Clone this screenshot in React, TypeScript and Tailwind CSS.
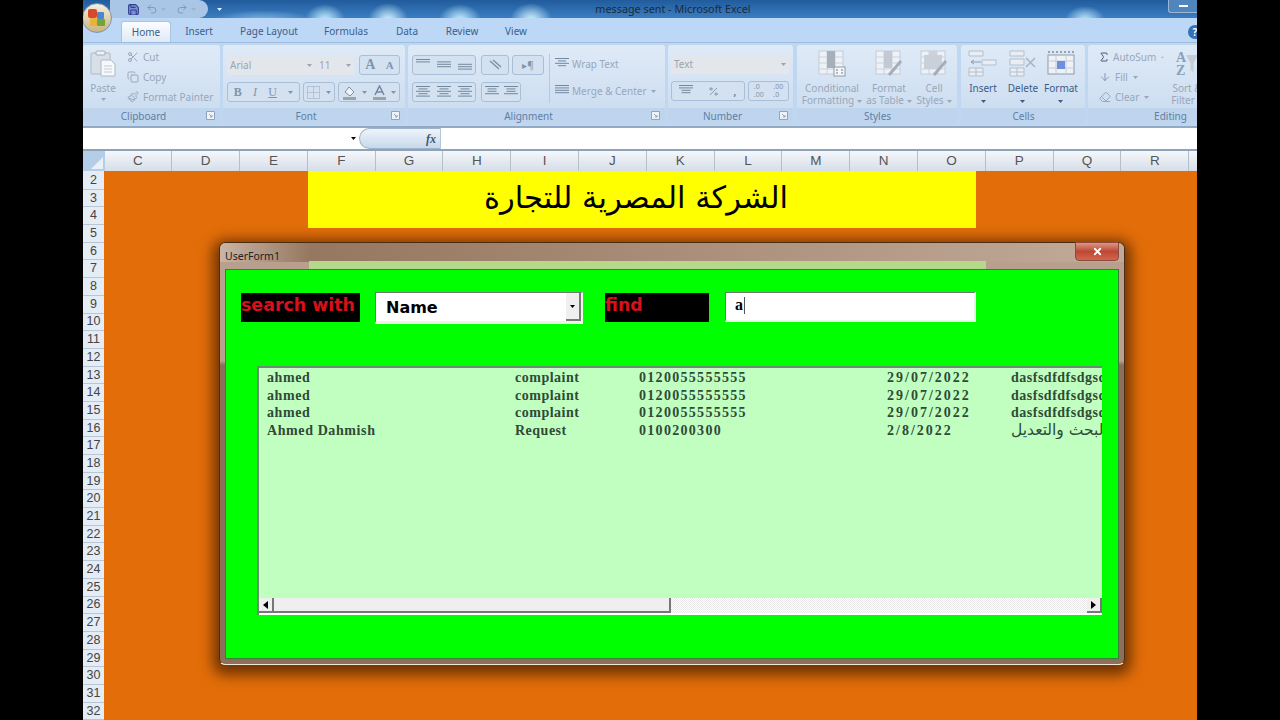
import { Scissors, Copy, Paintbrush, Sigma, Eraser, ArrowDown, Percent, Save, Undo2, Redo2, X } from "lucide-react";
import type { ReactNode } from "react";

const COLUMNS = ["C", "D", "E", "F", "G", "H", "I", "J", "K", "L", "M", "N", "O", "P", "Q", "R"];
const ROWS = Array.from({ length: 31 }, (_, i) => i + 2);
const TABS = [
  { label: "Insert", width: "w-[56px]" },
  { label: "Page Layout", width: "w-[84px]" },
  { label: "Formulas", width: "w-[70px]" },
  { label: "Data", width: "w-[52px]" },
  { label: "Review", width: "w-[58px]" },
  { label: "View", width: "w-[50px]" },
];
const RECORDS = [
  ["ahmed", "complaint", "0120055555555", "29/07/2022", "dasfsdfdfsdgsdfg"],
  ["ahmed", "complaint", "0120055555555", "29/07/2022", "dasfsdfdfsdgsdfg"],
  ["ahmed", "complaint", "0120055555555", "29/07/2022", "dasfsdfdfsdgsdfg"],
  ["Ahmed Dahmish", "Request", "0100200300", "2/8/2022", "البحث والتعديل"],
];

const MUTED = "text-[#98a7ba]";

function Chevron({ className = "" }: { className?: string }) {
  return (
    <svg width="5" height="3" viewBox="0 0 5 3" className={className}>
      <path d="M0 0h5L2.5 3z" fill="currentColor" />
    </svg>
  );
}

function Launcher() {
  return (
    <svg width="9" height="9" viewBox="0 0 9 9" className="text-[#8fa5bf]">
      <path d="M.5.5h8v8h-8z" fill="#eef3f9" stroke="currentColor" />
      <path d="M3 3l3 3M6 4v2H4" stroke="currentColor" fill="none" />
    </svg>
  );
}

function PasteIcon() {
  return (
    <svg width="26" height="27" viewBox="0 0 26 27">
      <rect x="1" y="3" width="19" height="21" rx="1" fill="#d9dfe6" stroke="#aeb8c4" />
      <rect x="6" y="1" width="9" height="4" rx="1" fill="#eef1f5" stroke="#a2adba" />
      <path d="M11 10h10l4 4v12H11z" fill="#f6f8fb" stroke="#aeb8c4" />
      <path d="M14 16h8M14 19h8M14 22h8" stroke="#c3ccd7" />
    </svg>
  );
}

function Group({ label, width, launcher = true, children }: { label: string; width: string; launcher?: boolean; children: ReactNode }) {
  return (
    <div className={`${width} flex h-[78px] shrink-0 flex-col overflow-hidden rounded-[3px] bg-gradient-to-b from-[#dfeaf7] to-[#c9dbef]`}>
      <div className="h-[63px] shrink-0">{children}</div>
      <div className="flex h-[15px] items-center bg-[#bfd5ed] pl-[6px] pr-[5px]">
        <span className={`flex-1 text-center text-[10px] leading-none text-[#5d7ea6] ${launcher ? "mr-[8px]" : ""}`}>{label}</span>
        {launcher ? <Launcher /> : null}
      </div>
    </div>
  );
}

function Combo({ value, width }: { value: string; width: string }) {
  return (
    <div className={`${width} flex h-[19px] items-center justify-between bg-[#e3e6ea] px-[3px] text-[10px] text-[#9aa5b2]`}>
      <span>{value}</span>
      <Chevron className="text-[#9aa5b2]" />
    </div>
  );
}

function ButtonStrip({ width, children }: { width: string; children: ReactNode }) {
  return (
    <div className={`${width} flex h-[20px] items-center justify-around rounded-[3px] border border-[#a9bfd8] bg-[#d3e1f1] text-[#8095ad]`}>
      {children}
    </div>
  );
}

function Lines({ rows }: { rows: number[] }) {
  return (
    <svg width="14" height="12" viewBox="0 0 14 12">
      {rows.map((w, i) => (
        <rect key={i} x={(14 - w) / 2} y={i * 2.4} width={w} height="1" fill="#72889f" />
      ))}
    </svg>
  );
}

function SheetIcon({ tint = "#b6c0cc", children }: { tint?: string; children?: ReactNode }) {
  return (
    <svg width="28" height="27" viewBox="0 0 28 27">
      <rect x="1" y="1" width="24" height="23" fill="#eef2f7" stroke="#c3ccd7" />
      <path d="M9 1v23M17 1v23M1 7h24M1 13h24M1 19h24" stroke="#c9d2dc" />
      <rect x="9" y="1" width="8" height="17" fill={tint} />
      {children}
    </svg>
  );
}

function BigButton({ label, sub, width, dark = false, children }: { label: string; sub: string; width: string; dark?: boolean; children: ReactNode }) {
  return (
    <div className={`${width} flex shrink-0 flex-col items-center pt-[5px]`}>
      <div className="flex h-[27px] items-center justify-center">{children}</div>
      <div className={`mt-[5px] whitespace-nowrap text-center text-[10px] leading-[12px] ${dark ? "text-[#3c5c85]" : MUTED}`}>
        <div>{label}</div>
        <div className="flex h-[12px] items-center justify-center gap-[3px]">
          {sub}
          <Chevron className="mt-[2px]" />
        </div>
      </div>
    </div>
  );
}

function SmallAction({ icon, label, arrow = false }: { icon: ReactNode; label: string; arrow?: boolean }) {
  return (
    <div className={`flex h-[20px] items-center gap-[3px] whitespace-nowrap text-[10px] ${MUTED}`}>
      <span className="flex w-[14px] justify-center">{icon}</span>
      {label}
      {arrow ? <Chevron className="ml-[2px]" /> : null}
    </div>
  );
}

function TitleBar() {
  return (
    <div className="relative flex h-[18px] shrink-0 items-center justify-center bg-[#2c6db2] bg-[radial-gradient(ellipse_20px_16px_at_242px_20px,#c8f2ff,transparent),radial-gradient(ellipse_20px_17px_at_305px_20px,#d4f6ff,transparent),radial-gradient(ellipse_21px_16px_at_377px_20px,#c8f2ff,transparent),radial-gradient(ellipse_21px_17px_at_448px_20px,#d4f6ff,transparent),radial-gradient(ellipse_20px_14px_at_1002px_20px,#c0ecfb,transparent),radial-gradient(ellipse_50px_10px_at_180px_20px,#7db4e0,transparent),linear-gradient(#215c9c,#3a7dc2)] pl-[66px] text-[10.8px] text-[#1d2a38]">
      message sent - Microsoft Excel
      <div className="absolute right-0 top-0 flex h-[13px] w-[29px] items-center justify-center rounded-bl-[3px] border-b border-l border-[#9db7d2] bg-[#4f86bd]">
        <div className="h-[2px] w-[9px] bg-white" />
      </div>
    </div>
  );
}

function OfficeButton() {
  return (
    <div className="absolute left-[-1px] top-[3px] flex h-[30px] w-[30px] items-center justify-center rounded-full border border-[#7d95ad] bg-gradient-to-b from-[#f4f0df] to-[#c9b37f]">
      <svg width="20" height="20" viewBox="0 0 20 20">
        <rect x="1" y="1" width="9" height="9" rx="2" fill="#d8482b" />
        <rect x="10" y="4" width="7" height="7" rx="1" fill="#4f86c9" />
        <rect x="3" y="10" width="7" height="8" rx="1" fill="#e7b33c" />
        <rect x="10" y="11" width="8" height="7" rx="1" fill="#6fa53a" />
      </svg>
    </div>
  );
}

function QuickAccess() {
  return (
    <div className="absolute left-[27px] top-0 flex h-[18px] w-[98px] items-center rounded-r-full bg-[#a9c6e6] pl-[17px]">
      <Save size={13} className="text-[#2d3f8f]" fill="#7d8fd0" />
      <Undo2 size={12} className="ml-[6px] text-[#7f99b6]" />
      <Chevron className="ml-[3px] text-[#9db4cc]" />
      <Redo2 size={12} className="ml-[10px] text-[#7f99b6]" />
      <Chevron className="ml-[3px] text-[#9db4cc]" />
      <Chevron className="absolute right-[-14px] top-[8px] text-[#e8f1fa]" />
    </div>
  );
}

function Tabs() {
  return (
    <div className="flex h-[25px] shrink-0 items-end border-b border-[#9fbcdc] bg-[#bdd7f6] pl-[38px] text-[10px] text-[#3c5f88]">
      <div className="flex h-[21px] w-[50px] items-center justify-center rounded-t-[3px] border border-b-0 border-[#a9c4e0] bg-gradient-to-b from-[#fbfdff] to-[#dfeaf7]">Home</div>
      {TABS.map((t) => (
        <div key={t.label} className={`${t.width} flex h-[21px] items-center justify-center whitespace-nowrap`}>{t.label}</div>
      ))}
      <div className="ml-auto mb-[3px] flex h-[14px] w-[14px] translate-x-[5px] items-center justify-center rounded-full bg-[#3270b8] text-[10px] font-bold text-white">?</div>
    </div>
  );
}

function ClipboardGroup() {
  return (
    <Group label="Clipboard" width="w-[137px]">
      <div className="flex pl-[6px] pt-[5px]">
        <div className={`flex w-[28px] flex-col items-center text-[10px] ${MUTED}`}>
          <PasteIcon />
          <span className="mt-[5px] leading-[12px]">Paste</span>
          <Chevron className="mt-[4px]" />
        </div>
        <div className="ml-[9px] mt-[-3px] flex flex-col">
          <SmallAction icon={<Scissors size={12} />} label="Cut" />
          <SmallAction icon={<Copy size={12} />} label="Copy" />
          <SmallAction icon={<Paintbrush size={12} />} label="Format Painter" />
        </div>
      </div>
    </Group>
  );
}

function FontGroup() {
  return (
    <Group label="Font" width="w-[182px]">
      <div className="flex flex-col gap-[7px] pl-[4px] pt-[10px]">
        <div className="flex items-center gap-[1px]">
          <Combo value="Arial" width="w-[88px]" />
          <Combo value="11" width="w-[38px]" />
          <div className="ml-[4px]">
            <ButtonStrip width="w-[41px]">
              <span className="font-['Liberation_Serif'] text-[14px] font-bold leading-none">A</span>
              <span className="font-['Liberation_Serif'] text-[11px] font-bold leading-none">A</span>
            </ButtonStrip>
          </div>
        </div>
        <div className="flex items-center gap-[3px]">
          <ButtonStrip width="w-[73px]">
            <span className="font-['Liberation_Serif'] text-[12px] font-bold">B</span>
            <span className="font-['Liberation_Serif'] text-[12px] italic">I</span>
            <span className="font-['Liberation_Serif'] text-[12px] underline">U</span>
            <Chevron />
          </ButtonStrip>
          <ButtonStrip width="w-[32px]">
            <svg width="13" height="13" viewBox="0 0 13 13">
              <path d="M.5.5h12v12H.5zM6.500 .5v12M.5 6.500h12" stroke="#94a7bc" strokeDasharray="1 1" fill="none" />
            </svg>
            <Chevron />
          </ButtonStrip>
          <ButtonStrip width="w-[62px]">
            <svg width="15" height="15" viewBox="0 0 15 15">
              <path d="M3 7l4-5 5 5-4 4z" fill="#eef3f9" stroke="#7b8ea3" />
              <rect x="1" y="12" width="13" height="3" fill="#9aa5a5" />
            </svg>
            <Chevron />
            <svg width="13" height="15" viewBox="0 0 13 15">
              <path d="M2 10L6.500 1 11 10M4 7h5" stroke="#75889e" strokeWidth="1.500" fill="none" />
              <rect x="0" y="12" width="13" height="3" fill="#9aa5a5" />
            </svg>
            <Chevron />
          </ButtonStrip>
        </div>
      </div>
    </Group>
  );
}

function AlignmentGroup() {
  return (
    <Group label="Alignment" width="w-[257px]">
      <div className="flex gap-[5px] pl-[4px] pt-[10px]">
        <div className="flex flex-col gap-[7px]">
          <ButtonStrip width="w-[64px]">
            <Lines rows={[14, 14, 0, 0, 0]} />
            <Lines rows={[0, 14, 14, 14, 0]} />
            <Lines rows={[0, 0, 14, 14, 14]} />
          </ButtonStrip>
          <ButtonStrip width="w-[64px]">
            <Lines rows={[14, 9, 14, 9, 14]} />
            <Lines rows={[14, 9, 14, 9, 14]} />
            <Lines rows={[14, 9, 14, 9, 14]} />
          </ButtonStrip>
        </div>
        <div className="flex flex-col gap-[7px]">
          <div className="flex gap-[3px]">
            <ButtonStrip width="w-[28px]">
              <svg width="13" height="12" viewBox="0 0 13 12">
                <path d="M1 2l9 8M4 1l8 7" stroke="#7f93a9" strokeWidth="1.500" />
              </svg>
            </ButtonStrip>
            <ButtonStrip width="w-[32px]">
              <span className="text-[10px]">▸¶</span>
            </ButtonStrip>
          </div>
          <ButtonStrip width="w-[40px]">
            <Lines rows={[14, 9, 9, 14]} />
            <Lines rows={[14, 9, 9, 14]} />
          </ButtonStrip>
        </div>
        <div className="my-[-1px] w-[1px] self-stretch bg-[#b4c8de]" />
        <div className="mt-[-1px] flex flex-col gap-[7px]">
          <div className={`flex h-[20px] items-center gap-[3px] text-[10px] ${MUTED}`}>
            <Lines rows={[14, 8, 14, 8]} />
            Wrap Text
          </div>
          <div className={`flex h-[20px] items-center gap-[3px] whitespace-nowrap text-[10px] ${MUTED}`}>
            <Lines rows={[14, 14, 14, 14]} />
            Merge &amp; Center
            <Chevron className="ml-[1px]" />
          </div>
        </div>
      </div>
    </Group>
  );
}

function NumberGroup() {
  return (
    <Group label="Number" width="w-[125px]">
      <div className="flex flex-col gap-[7px] pl-[3px] pt-[10px]">
        <Combo value="Text" width="w-[118px]" />
        <div className="flex gap-[3px]">
          <ButtonStrip width="w-[74px]">
            <Lines rows={[14, 14, 9, 9]} />
            <Percent size={11} />
            <span className="text-[12px] font-bold leading-none">,</span>
          </ButtonStrip>
          <ButtonStrip width="w-[41px]">
            <span className="text-[7px] leading-[8px]">.0<br />.00</span>
            <span className="text-[7px] leading-[8px]">.00<br />.0</span>
          </ButtonStrip>
        </div>
      </div>
    </Group>
  );
}

function StylesGroup() {
  return (
    <Group label="Styles" width="w-[160px]" launcher={false}>
      <div className="flex pl-[3px]">
        <BigButton label="Conditional" sub="Formatting" width="w-[64px]">
          <SheetIcon tint="#a7afbb">
            <rect x="16" y="17" width="11" height="9" fill="#f4f6f9" stroke="#8f9aa8" />
            <path d="M18 20h2M18 23h2M23 20h2M23 23h2" stroke="#6f7c8c" />
          </SheetIcon>
        </BigButton>
        <BigButton label="Format" sub="as Table" width="w-[50px]">
          <SheetIcon tint="#c2c9d3">
            <path d="M14 25l12-14" stroke="#a4adb8" strokeWidth="3" />
          </SheetIcon>
        </BigButton>
        <BigButton label="Cell" sub="Styles" width="w-[40px]">
          <SheetIcon tint="#cdd3dc">
            <rect x="4" y="5" width="18" height="14" fill="#c9d0da" />
            <path d="M14 25l12-14" stroke="#a4adb8" strokeWidth="3" />
          </SheetIcon>
        </BigButton>
      </div>
    </Group>
  );
}

function CellsGroup() {
  return (
    <Group label="Cells" width="w-[124px]" launcher={false}>
      <div className="flex pl-[2px]">
        <BigButton label="Insert" sub="" width="w-[40px]" dark>
          <svg width="30" height="27" viewBox="0 0 30 27">
            <path d="M1 1h14v5H1zM1 18h14v8H1zM8 18v8M1 22h14M14 10h14v5H14z" fill="#e9eef4" stroke="#b4bfcc" />
            <path d="M3 12h10M3 12l3-2M3 12l3 2" stroke="#8c9bae" fill="none" />
          </svg>
        </BigButton>
        <BigButton label="Delete" sub="" width="w-[40px]" dark>
          <svg width="28" height="27" viewBox="0 0 28 27">
            <path d="M1 1h14v5H1zM1 18h14v8H1zM8 18v8M1 22h14M1 9h14v6H1z" fill="#e9eef4" stroke="#b4bfcc" />
            <path d="M17 8l9 9M26 8l-9 9" stroke="#aab4c1" strokeWidth="1.500" />
          </svg>
        </BigButton>
        <BigButton label="Format" sub="" width="w-[36px]" dark>
          <svg width="28" height="27" viewBox="0 0 28 27">
            <path d="M1 2h26" stroke="#4c5a6c" strokeDasharray="2 2" />
            <rect x="1" y="5" width="26" height="19" fill="#eef2f7" stroke="#8d99a8" />
            <path d="M9 5v19M19 5v19M1 11h26M1 18h26" stroke="#c3ccd7" />
            <rect x="10" y="11" width="8" height="8" fill="#6e8fe0" />
          </svg>
        </BigButton>
      </div>
    </Group>
  );
}

function EditingGroup() {
  return (
    <Group label="Editing" width="w-[164px]" launcher={false}>
      <div className="flex pl-[10px]">
        <div className="flex w-[66px] shrink-0 flex-col pt-[2px]">
          <SmallAction icon={<Sigma size={12} className="text-[#4a5a70]" />} label="AutoSum" arrow />
          <SmallAction icon={<ArrowDown size={12} className="text-[#7d9ac0]" />} label="Fill" arrow />
          <SmallAction icon={<Eraser size={12} />} label="Clear" arrow />
        </div>
        <div className="ml-[8px] w-[30px] shrink-0">
          <BigButton label="Sort &" sub="Filter" width="w-[30px]">
            <span className="font-['Liberation_Serif'] text-[14px] font-bold leading-[13px] text-[#8ba0b8]">A<br />Z</span>
            <svg width="12" height="20" viewBox="0 0 12 20">
              <path d="M0 1h12L7.500 9v9l-3-2V9z" fill="#c3ccd7" />
            </svg>
          </BigButton>
        </div>
      </div>
    </Group>
  );
}

function Ribbon() {
  return (
    <div className="flex h-[85px] shrink-0 items-start overflow-hidden border-b-2 border-[#92aac4] bg-[#bfd7f1] pt-[2px]">
      <ClipboardGroup />
      <div className="ml-[3px]"><FontGroup /></div>
      <div className="ml-[3px]"><AlignmentGroup /></div>
      <div className="ml-[3px]"><NumberGroup /></div>
      <div className="ml-[4px]"><StylesGroup /></div>
      <div className="ml-[4px]"><CellsGroup /></div>
      <div className="ml-[3px]"><EditingGroup /></div>
    </div>
  );
}

function FormulaBar() {
  return (
    <div className="flex h-[23px] shrink-0 items-center border-b-2 border-[#8ea3b8] bg-white">
      <div className="flex w-[276px] justify-end pr-[3px]">
        <Chevron className="text-black" />
      </div>
      <div className="flex h-full w-[82px] items-center justify-end rounded-l-full border border-r-[#b6c6d8] border-[#9fb4ca] bg-gradient-to-b from-[#eef4fb] to-[#c7d8ec] pr-[4px] font-['Liberation_Serif'] text-[12px] font-bold italic text-[#45586e]">
        fx
      </div>
    </div>
  );
}

function ColumnHeaders() {
  return (
    <div className="flex h-[20px] shrink-0 bg-gradient-to-b from-[#f5f7fb] to-[#d6dee8]">
      <div className="flex w-[21.5px] shrink-0 items-end justify-end bg-[#b4cde8] p-[2px]">
        <div className="h-0 w-0 border-b-[12px] border-l-[12px] border-b-[#e8f0f8] border-l-transparent" />
      </div>
      {COLUMNS.map((c) => (
        <div key={c} className="flex w-[67.8px] shrink-0 items-center justify-center border-r border-[#b5bfca] font-['Liberation_Sans'] text-[13.5px] text-[#555]">
          {c}
        </div>
      ))}
    </div>
  );
}

function RowHeaders() {
  return (
    <div className="w-[21px] shrink-0 overflow-hidden bg-[#e4ecf6] pt-[1px]">
      {ROWS.map((r) => (
        <div key={r} className="flex h-[17.7px] items-center justify-center border-b border-[#b9c6d6] font-['Liberation_Sans'] text-[12.5px] text-[#444]">
          {r}
        </div>
      ))}
    </div>
  );
}

function ScrollButton({ dir }: { dir: "left" | "right" }) {
  return (
    <div className="flex h-full w-[15px] shrink-0 items-center justify-center border-b-2 border-r-2 border-[#777] bg-[#efefef]">
      <svg width="5" height="8" viewBox="0 0 5 8">
        <path d={dir === "left" ? "M5 0v8L0 4z" : "M0 0v8l5-4z"} fill="#000" />
      </svg>
    </div>
  );
}

function RecordList() {
  return (
    <div className="ml-[31px] mt-[42px] flex h-[249px] w-[845px] flex-col border-l-2 border-t-2 border-[#6d8a72] bg-[#c1ffc1]">
      <div className="flex-1 overflow-hidden pl-[8px] pt-[1px] font-['Liberation_Serif'] text-[14px] font-bold leading-[17.6px] text-[#2f4a36]">
        {RECORDS.map((r, i) => (
          <div key={i} className="flex h-[17.6px] whitespace-nowrap">
            <span className="w-[248px] shrink-0 tracking-[0.6px]">{r[0]}</span>
            <span className="w-[124px] shrink-0 tracking-[0.5px]">{r[1]}</span>
            <span className="w-[248px] shrink-0 tracking-[1.3px]">{r[2]}</span>
            <span className="w-[124px] shrink-0 tracking-[2px]">{r[3]}</span>
            {i === 3 ? (
              <span className="w-[91px] shrink-0 overflow-hidden font-['DejaVu_Sans'] text-[15.5px] font-normal">{r[4]}</span>
            ) : (
              <span className="w-[91px] shrink-0 overflow-hidden tracking-[0.5px]">{r[4]}</span>
            )}
          </div>
        ))}
      </div>
      <div className="flex h-[17px] shrink-0 border-b-2 border-white bg-[repeating-conic-gradient(#e9e9e9_0_25%,#ffffff_0_50%)] bg-[length:2px_2px]">
        <ScrollButton dir="left" />
        <div className="h-full w-[397px] shrink-0 border-b-2 border-r-2 border-[#777] bg-[#efefef]" />
        <div className="flex-1" />
        <ScrollButton dir="right" />
      </div>
    </div>
  );
}

function UserForm() {
  return (
    <div className="absolute left-[136px] top-[242px] flex h-[423px] w-[906px] flex-col rounded-[6px] border border-[#4a2c12] border-b-[#efe6dc] bg-gradient-to-b from-[#b9a08e] from-[28%] to-[#8d6f5a] to-[29%] px-[5px] pb-[5px] shadow-[0_4px_14px_6px_rgba(60,25,0,0.7)]">
      <div className="relative flex h-[26px] shrink-0 items-start">
        <div className="absolute inset-x-[-5px] top-0 h-[19px] rounded-t-[6px] bg-gradient-to-r from-[#c9b5a6] via-[#96775f] via-[10%] to-[#c2aa99]" />
        <div className="absolute bottom-0 left-[84px] right-[133px] h-[8px] bg-[#b5d98b]" />
        <span className="relative pt-[5px] text-[10.5px] leading-[16px] text-[#222]">UserForm1</span>
        <div className="absolute right-[0px] top-[-1px] flex h-[19px] w-[44px] items-center justify-center rounded-b-[4px] border border-[#8a4a3c] bg-gradient-to-b from-[#dd9485] via-[#bd4733] to-[#d2664d]">
          <X size={11} strokeWidth={4} className="text-white" />
        </div>
      </div>
      <div className="flex-1 border border-[#3c7d3c] bg-[#00ff00]">
        <div className="flex items-start pl-[15px] pt-[23px] font-['DejaVu_Sans'] font-bold">
          <div className="h-[29px] w-[119px] bg-black text-[17.4px] leading-[25px] text-[#d8101c]">search with</div>
          <div className="ml-[15px] mt-[-1px] flex h-[32px] w-[208px] items-center border-l border-t border-[#6f7a6f] border-b-[3px] border-b-[#e8f5e8] border-r-[2px] border-r-[#e8f5e8] bg-white pl-[10px] text-[16px] text-black">
            <span className="flex-1 pt-[2px]">Name</span>
            <div className="flex h-full w-[15px] items-center justify-center border-b-2 border-r-2 border-[#777] bg-[#efefef]">
              <Chevron className="text-black" />
            </div>
          </div>
          <div className="ml-[22px] h-[29px] w-[104px] bg-black text-[17.4px] leading-[25px] text-[#d8101c]">find</div>
          <div className="ml-[16px] mt-[-1px] flex h-[30px] w-[251px] items-center border-l border-t border-[#6f7a6f] border-b-2 border-b-[#e8f5e8] border-r-2 border-r-[#e8f5e8] bg-white pb-[3px] pl-[9px] font-['Liberation_Serif'] text-[16px] text-black">
            a
            <div className="ml-[1px] h-[17px] w-[1px] bg-[#555]" />
          </div>
        </div>
        <RecordList />
      </div>
    </div>
  );
}

function Sheet() {
  return (
    <div className="relative flex min-h-0 flex-1 overflow-hidden">
      <RowHeaders />
      <div className="flex-1 bg-[#e36e09] pl-[204px]">
        <div className="flex h-[57px] w-[668px] items-center justify-center bg-[#ffff00] pb-[4px] pr-[12px] font-['DejaVu_Sans'] text-[30.5px] text-black" dir="rtl">
          الشركة المصرية للتجارة
        </div>
      </div>
    </div>
  );
}

export default function App() {
  return (
    <div className="flex h-[720px] w-[1280px] justify-center overflow-hidden bg-black font-['Noto_Sans',sans-serif]">
      <div className="relative flex h-[720px] w-[1114px] flex-col overflow-hidden">
        <TitleBar />
        <Tabs />
        <Ribbon />
        <FormulaBar />
        <ColumnHeaders />
        <Sheet />
        <QuickAccess />
        <OfficeButton />
        <UserForm />
      </div>
    </div>
  );
}
